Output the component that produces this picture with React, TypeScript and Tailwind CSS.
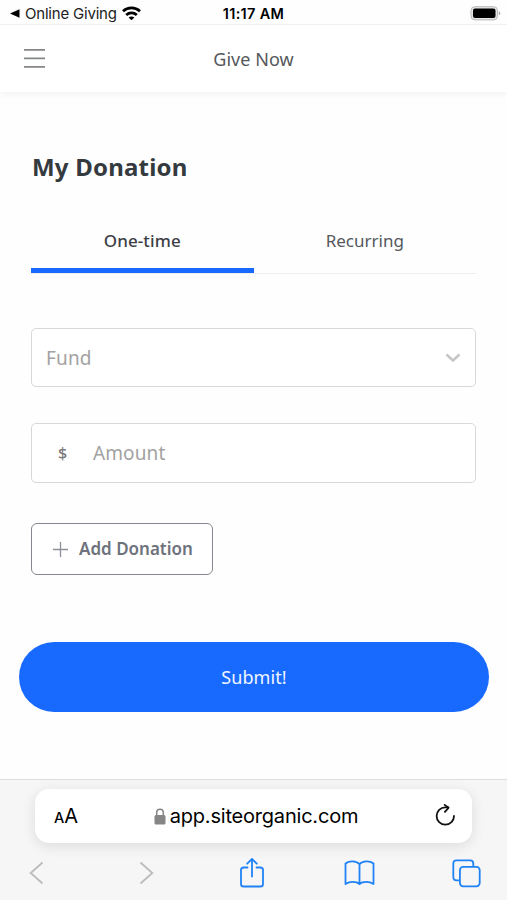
import React from "react";

function StatusBar() {
  return (
    <div className="grid h-[25px] grid-cols-3 items-center border-b border-[#f2f2f2] pt-[3px] font-['Inter','Liberation_Sans',sans-serif] text-black">
      <div className="flex items-center pl-[10px]">
        <svg width="10" height="9" viewBox="0 0 10 9">
          <path d="M0 4.5 9.5 0.3v8.4z" fill="#000" />
        </svg>
        <span className="ml-[5px] whitespace-nowrap text-[15px] leading-5 tracking-[-0.2px] text-[#222]">Online Giving</span>
        <svg className="ml-[5px] shrink-0" width="19" height="15" viewBox="0 0 19 15" fill="none" stroke="#000" strokeWidth="2.7">
          <path d="M1 5.2C5.8.7 13.2.7 18 5.2" />
          <path d="M4.2 8.9c3-2.8 7.600-2.800 10.600 0" />
          <path d="M9.500 14.300 6.600 11.500c1.700-1.500 4.100-1.500 5.800 0z" fill="#000" stroke="none" />
        </svg>
      </div>
      <div className="text-center text-[14.5px] font-semibold leading-5 tracking-[0.3px]">11:17 AM</div>
      <div className="flex justify-end pr-[6px]">
        <svg width="31" height="15" viewBox="0 0 31 15">
          <rect x="1" y="0.700" width="26.500" height="13.200" rx="3.800" fill="#e6e6e6" stroke="#b9b9b9" />
          <rect x="3" y="2.500" width="22.500" height="9.600" rx="2" fill="#000" />
          <path d="M28.800 5.300c2 .6 2 3.400 0 4z" fill="#aaa" />
        </svg>
      </div>
    </div>
  );
}

function Header() {
  return (
    <header className="grid h-[67px] grid-cols-3 items-center bg-white shadow-[0_3px_6px_rgba(0,0,0,0.045)]">
      <svg className="ml-[23px]" width="23" height="21" viewBox="0 0 23 21" stroke="#858888" strokeWidth="1.700">
        <path d="M1 1.800h21M1 10.300h21M1 18.900h21" />
      </svg>
      <div className="text-center text-[18px] leading-6 tracking-[0.05px] text-[#55585b]">Give Now</div>
    </header>
  );
}

function Tabs() {
  return (
    <div className="mt-[31px] grid h-[61px] w-[445px] grid-cols-2 border-b border-[#eeeeee] text-center text-[17px] leading-6 text-[#54585c]">
      <div className="h-[60px] border-b-[5px] border-[#1769ff] pt-[16px] font-medium tracking-[0.12px] text-[#3c4044]">One-time</div>
      <div className="pt-[16px]">Recurring</div>
    </div>
  );
}

function BrowserBar() {
  return (
    <footer className="flex h-[121px] flex-col border-t border-[#dedede] bg-[#f6f6f6]">
      <div className="mx-[35px] mt-[9px] grid h-[54px] shrink-0 grid-cols-[60px_1fr_60px] items-center rounded-[14px] bg-white font-['Inter','Liberation_Sans',sans-serif] text-black shadow-[0_3px_14px_rgba(0,0,0,0.11)]">
        <div className="flex items-baseline pl-[19px] pt-[2px] leading-6">
          <span className="text-[14.500px] font-medium">A</span>
          <span className="text-[20px]">A</span>
        </div>
        <div className="flex items-center justify-center gap-[4px] pl-[5px]">
          <svg width="12" height="17" viewBox="0 0 12 17">
            <rect x="0.500" y="7" width="11" height="9.500" rx="1.500" fill="#858585" />
            <path d="M2.700 8V4.500a3.300 3.300 0 0 1 6.600 0V8" fill="none" stroke="#858585" strokeWidth="1.500" />
          </svg>
          <span className="text-[20px] leading-6 tracking-[-0.2px]">app.siteorganic.com</span>
        </div>
        <svg className="ml-[23px]" width="22" height="24" viewBox="0 0 22 24" fill="none" stroke="#111" strokeWidth="1.800" strokeLinecap="round" strokeLinejoin="round">
          <path d="M19 12a8.700 8.700 0 1 1-8.700-8.700h3" />
          <path d="m9.700 0.900 3.800 2.900-3.600 4" />
        </svg>
      </div>
      <nav className="-ml-[17px] -mr-[14px] mt-[13px] grid h-[34px] grid-cols-5 items-center justify-items-center" aria-label="Browser">
        <svg width="15" height="24" viewBox="0 0 15 24" fill="none" stroke="#bcbcbe" strokeWidth="1.800">
          <path d="M13.500 1.500 1.700 12l11.800 10.500" />
        </svg>
        <svg className="ml-[5px]" width="15" height="24" viewBox="0 0 15 24" fill="none" stroke="#bcbcbe" strokeWidth="1.800">
          <path d="M1.500 1.500 13.300 12 1.500 22.500" />
        </svg>
        <svg className="ml-[1px]" width="26" height="32" viewBox="0 0 26 32" fill="none" stroke="#1f83f6" strokeWidth="1.800" strokeLinecap="round" strokeLinejoin="round">
          <path d="M8.500 10.500H4.600Q2 10.500 2 13.100v13.800Q2 29.500 4.600 29.500h16.800q2.600 0 2.600-2.600V13.100Q24 10.500 21.400 10.500h-3.900M13 19.500V2M8.200 6.700 13 1.900l4.800 4.800" />
        </svg>
        <svg width="31" height="26" viewBox="0 0 31 26" fill="none" stroke="#1f83f6" strokeWidth="1.800" strokeLinejoin="round">
          <path d="M15.500 4.200C12.500.5 5 .5 1.500 3.500V24c4-2.800 11-2.800 14 0 3-2.800 10-2.800 14 0V3.500C26 .5 18.500.5 15.500 4.200zV24" />
        </svg>
        <svg className="mr-[2px]" width="29" height="29" viewBox="0 0 29 29" fill="none" stroke="#1f83f6" strokeWidth="1.800">
          <path d="M7.300 21.300H4.600Q1.300 21.300 1.300 18V4.600q0-3.300 3.300-3.300H18q3.300 0 3.300 3.300v2.700" />
          <rect x="7.900" y="7.900" width="19.800" height="19.400" rx="3.300" />
        </svg>
      </nav>
    </footer>
  );
}

export default function App() {
  return (
    <div className="flex h-[900px] w-[507px] flex-col overflow-hidden bg-[#fefefe] font-['Noto_Sans','Open_Sans',sans-serif]">
      <StatusBar />
      <Header />
      <main className="flex-1 px-[31px]">
        <h1 className="mt-[60px] pl-[1px] text-[24px] font-bold leading-[30px] tracking-[0.2px] text-[#343a3e]">My Donation</h1>
        <Tabs />
        <div className="mt-[54px] flex h-[59px] w-[445px] items-center justify-between rounded-[5px] border border-[#d8d8d8] bg-white pl-[14px] pr-[14px] text-[19px] text-[#a2a2a2]">
          <span className="pt-[1px] tracking-[0.15px]">Fund</span>
          <svg width="16" height="11" viewBox="0 0 16 11" fill="none" stroke="#c6c6c6" strokeWidth="2.600">
            <path d="m1.500 2.500 6.500 6L14.500 2.500" />
          </svg>
        </div>
        <div className="mt-[36px] flex h-[60px] w-[445px] items-center rounded-[5px] border border-[#d8d8d8] bg-white text-[19px] text-[#a2a2a2]">
          <span className="w-[61px] text-center text-[16px] font-medium text-[#777]">$</span>
          <span className="tracking-[0.1px]">Amount</span>
        </div>
        <button className="mt-[40px] flex h-[52px] w-[182px] items-center rounded-[6px] border border-[#85888e] bg-white pl-[20px] text-[17px] font-semibold text-[#6d727c]">
          <svg className="mr-[10px] shrink-0" width="17" height="17" viewBox="0 0 17 17" stroke="#8c9098" strokeWidth="1.300">
            <path d="M8.500 1v15M1 8.500h15" />
          </svg>
          <span className="whitespace-nowrap">Add Donation</span>
        </button>
        <button className="-mx-[12px] mt-[67px] flex h-[70px] w-[470px] items-center justify-center rounded-full bg-[#186aff] text-[18px] tracking-[0.1px] text-[#f0f6ff]">
          Submit!
        </button>
      </main>
      <BrowserBar />
    </div>
  );
}
